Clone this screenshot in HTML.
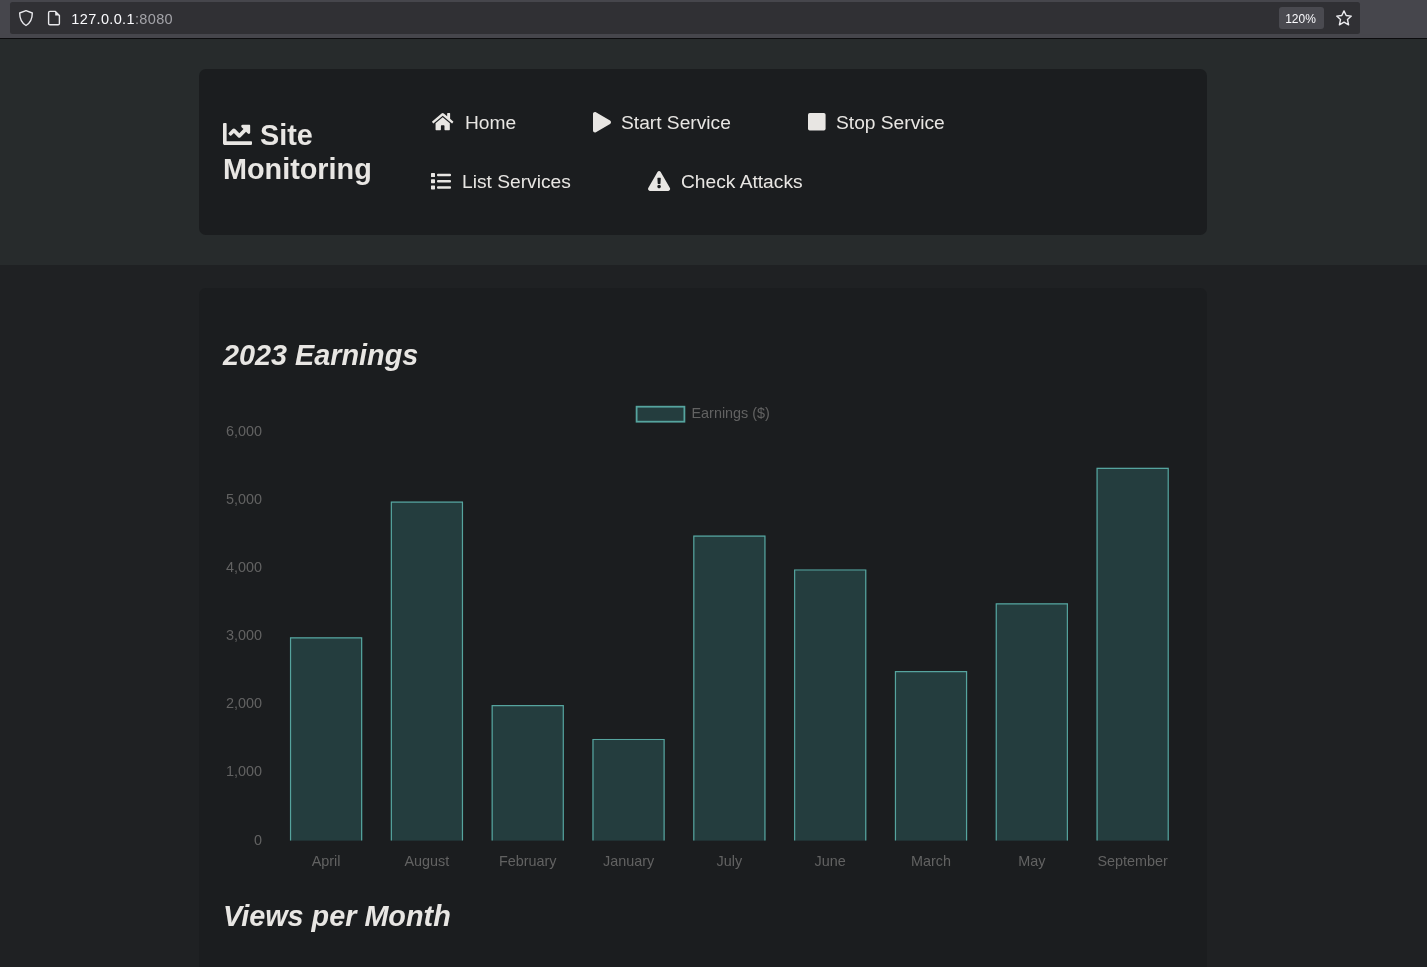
<!DOCTYPE html>
<html><head><meta charset="utf-8">
<style>
*{margin:0;padding:0;box-sizing:border-box}
html,body{width:1427px;height:967px;overflow:hidden;background:#1f2123;font-family:"Liberation Sans",sans-serif}
.gs{transform:translateZ(0)}
#tb{position:absolute;left:0;top:0;width:1427px;height:38px;background:#46464c}
#url{position:absolute;left:10px;top:2px;width:1350px;height:32px;background:#303034;border-radius:2.5px}
#tbline{position:absolute;left:0;top:38px;width:1427px;height:1px;background:#0c0c0e}
#urltext{position:absolute;left:71.3px;top:10.7px;font-size:14.5px;letter-spacing:0.35px;color:#fbfbfe;white-space:nowrap}
#urltext span{color:#a3a3a8}
#zoom{position:absolute;left:1279px;top:7px;width:45px;height:22px;background:#4a4a50;border-radius:3px;color:#fbfbfe;font-size:12px;text-align:center;line-height:22px}
#hdr{position:absolute;left:0;top:39px;width:1427px;height:226px;background:#272b2c}
#nav{position:absolute;left:199px;top:69px;width:1008px;height:166px;background:#1b1d1f;border-radius:7px}
#brand{position:absolute;left:223px;top:118px;color:#e8e6e3;font-weight:bold;font-size:28.8px;line-height:34px;white-space:nowrap}
.ni{position:absolute;color:#e8e6e3;font-size:19.2px;white-space:nowrap;line-height:22px}
#card{position:absolute;left:199px;top:288px;width:1008px;height:700px;background:#1b1d1f;border-radius:7px}
h2{position:absolute;color:#e8e6e3;font-weight:bold;font-style:italic;font-size:28.8px;white-space:nowrap;line-height:34px}
svg{position:absolute;overflow:visible}
</style></head><body>
<div id="tb">
<div id="url"></div>
<svg style="left:0;top:0" width="80" height="38" viewBox="0 0 80 38">
 <path d="M26 10.6 L32.3 13 C32.3 19.5 30 23.2 26 25.5 C22 23.2 19.7 19.5 19.7 13 Z" fill="none" stroke="#e8e8ec" stroke-width="1.4" stroke-linejoin="round"/>
 <path d="M49.9 11.4 H55.4 L59.4 15.4 V23.5 Q59.4 24.8 58.1 24.8 H49.9 Q48.6 24.8 48.6 23.5 V12.7 Q48.6 11.4 49.9 11.4 Z" fill="none" stroke="#e8e8ec" stroke-width="1.4" stroke-linejoin="round"/>
 <path d="M55.2 11.6 V15.6 H59.2 Z" fill="#e8e8ec"/>
</svg>
<div id="urltext" class="gs">127.0.0.1<span>:8080</span></div>
<div id="zoom"><span class="gs" style="display:inline-block;position:relative;left:-1px;top:0.5px">120%</span></div>
<svg style="left:1334px;top:9px" width="20" height="18" viewBox="0 0 20 18">
 <path d="M10 1.9 L12.2 6.5 L17.3 7.1 L13.5 10.6 L14.6 15.8 L10 13.2 L5.4 15.8 L6.5 10.6 L2.7 7.1 L7.8 6.5 Z" fill="none" stroke="#ececf0" stroke-width="1.4" stroke-linejoin="round"/>
</svg>
</div>
<div id="tbline"></div>
<div id="hdr"></div>
<div id="nav"></div>
<div id="brand" class="gs"><span style="display:inline-block;width:37px"></span>Site<br>Monitoring</div>
<!-- chart-line icon -->
<svg style="left:223px;top:123.2px" width="29" height="22" viewBox="0 64 512 384" preserveAspectRatio="none">
 <path fill="#e8e6e3" d="M496 384H64V80c0-8.84-7.16-16-16-16H16C7.160 64 0 71.16 0 80v336c0 17.67 14.33 32 32 32h464c8.84 0 16-7.16 16-16v-32c0-8.84-7.16-16-16-16zM464 96H345.94c-21.38 0-32.09 25.85-16.970 40.97l32.4 32.4L288 242.75l-73.37-73.37c-12.5-12.5-32.76-12.5-45.250 0l-68.69 68.69c-6.25 6.25-6.25 16.38 0 22.63l22.62 22.62c6.25 6.25 16.38 6.25 22.63 0L192 237.25l73.37 73.37c12.5 12.5 32.76 12.5 45.25 0l96-96 32.4 32.4c15.12 15.12 40.97 4.41 40.97-16.97V112c.01-8.84-7.15-16-15.99-16z"/>
</svg>
<!-- home -->
<svg style="left:431.7px;top:112.8px" width="21.4" height="17.2" viewBox="0 32 576 448" preserveAspectRatio="none">
 <path fill="#e8e6e3" d="M280.37 148.26L96 300.11V464a16 16 0 0 0 16 16l112.06-.29a16 16 0 0 0 15.92-16V368a16 16 0 0 1 16-16h64a16 16 0 0 1 16 16v95.64a16 16 0 0 0 16 16.05L464 480a16 16 0 0 0 16-16V300L295.67 148.26a12.19 12.19 0 0 0-15.3 0zM571.6 251.47L488 182.56V44.05a12 12 0 0 0-12-12h-56a12 12 0 0 0-12 12v72.61L318.47 43a48 48 0 0 0-61 0L4.34 251.470a12 12 0 0 0-1.6 16.9l25.5 31A12 12 0 0 0 45.15 301l235.22-193.74a12.19 12.19 0 0 1 15.3 0L530.9 301a12 12 0 0 0 16.9-1.6l25.5-31a12 12 0 0 0-1.7-16.930z"/>
</svg>
<!-- play -->
<svg style="left:592.5px;top:111.5px" width="18" height="20.5" viewBox="0 0 448 512" preserveAspectRatio="none">
 <path fill="#e8e6e3" d="M424.4 214.7L72.4 6.6C43.8-10.3 0 6.1 0 47.9V464c0 37.5 40.7 60.1 72.4 41.3l352-208c31.4-18.5 31.5-64.1 0-82.6z"/>
</svg>
<!-- stop -->
<svg style="left:808px;top:112.5px" width="17.6" height="17.6" viewBox="0 0 448 448">
 <rect x="0" y="0" width="448" height="448" rx="44" fill="#e8e6e3"/>
</svg>
<!-- list -->
<svg style="left:431px;top:172.5px" width="20" height="16.5" viewBox="0 0 20 16.5">
 <rect x="0" y="0" width="4" height="4" rx="0.6" fill="#e8e6e3"/>
 <rect x="0" y="6.2" width="4" height="4" rx="0.6" fill="#e8e6e3"/>
 <rect x="0" y="12.4" width="4" height="4" rx="0.6" fill="#e8e6e3"/>
 <rect x="6" y="0.8" width="14" height="2.5" rx="1" fill="#e8e6e3"/>
 <rect x="6" y="7" width="14" height="2.5" rx="1" fill="#e8e6e3"/>
 <rect x="6" y="13.2" width="14" height="2.5" rx="1" fill="#e8e6e3"/>
</svg>
<!-- warning -->
<svg style="left:648px;top:170.9px" width="22.2" height="19.9" viewBox="0 0 576 512" preserveAspectRatio="none">
 <path fill="#e8e6e3" d="M569.517 440.013C587.975 472.007 564.806 512 527.940 512H48.054c-36.937 0-59.999-40.055-41.577-71.987L246.423 23.985c18.467-32.009 64.720-31.951 83.154 0l239.940 416.028zM288 354c-25.405 0-46 20.595-46 46s20.595 46 46 46 46-20.595 46-46-20.595-46-46-46zm-43.673-165.346l7.418 136c.347 6.364 5.609 11.346 11.982 11.346h48.546c6.373 0 11.635-4.982 11.982-11.346l7.418-136c.375-6.874-5.098-12.654-11.982-12.654h-63.383c-6.884 0-12.356 5.780-11.981 12.654z"/>
</svg>
<div class="ni gs" style="left:465px;top:112px">Home</div>
<div class="ni gs" style="left:621px;top:112px">Start Service</div>
<div class="ni gs" style="left:836px;top:112px">Stop Service</div>
<div class="ni gs" style="left:462px;top:171px">List Services</div>
<div class="ni gs" style="left:681px;top:171px">Check Attacks</div>
<div id="card"></div>
<h2 class="gs" style="left:223px;top:338px">2023 Earnings</h2>
<h2 class="gs" style="left:223px;top:899px">Views per Month</h2>
<!-- CHART -->
<svg style="left:0;top:0" width="1427" height="967" viewBox="0 0 1427 967">
<g class="gs" font-family="Liberation Sans, sans-serif" font-size="14.4" fill="#626262">
<rect x="289.94" y="637.20" width="72.30" height="203.40" fill="rgba(75,192,192,0.2)"/>
<path d="M290.54 840.60 V637.80 H361.64 V840.60" fill="none" stroke="rgb(86,164,158)" stroke-width="1.2"/>
<text x="326.09" y="865.8" text-anchor="middle">April</text>
<rect x="390.76" y="501.60" width="72.30" height="339.00" fill="rgba(75,192,192,0.2)"/>
<path d="M391.36 840.60 V502.20 H462.46 V840.60" fill="none" stroke="rgb(86,164,158)" stroke-width="1.2"/>
<text x="426.91" y="865.8" text-anchor="middle">August</text>
<rect x="491.58" y="705.00" width="72.30" height="135.60" fill="rgba(75,192,192,0.2)"/>
<path d="M492.18 840.60 V705.60 H563.28 V840.60" fill="none" stroke="rgb(86,164,158)" stroke-width="1.2"/>
<text x="527.73" y="865.8" text-anchor="middle">February</text>
<rect x="592.40" y="738.90" width="72.30" height="101.70" fill="rgba(75,192,192,0.2)"/>
<path d="M593.00 840.60 V739.50 H664.10 V840.60" fill="none" stroke="rgb(86,164,158)" stroke-width="1.2"/>
<text x="628.55" y="865.8" text-anchor="middle">January</text>
<rect x="693.22" y="535.50" width="72.30" height="305.10" fill="rgba(75,192,192,0.2)"/>
<path d="M693.82 840.60 V536.10 H764.92 V840.60" fill="none" stroke="rgb(86,164,158)" stroke-width="1.2"/>
<text x="729.37" y="865.8" text-anchor="middle">July</text>
<rect x="794.04" y="569.40" width="72.30" height="271.20" fill="rgba(75,192,192,0.2)"/>
<path d="M794.64 840.60 V570.00 H865.74 V840.60" fill="none" stroke="rgb(86,164,158)" stroke-width="1.2"/>
<text x="830.19" y="865.8" text-anchor="middle">June</text>
<rect x="894.86" y="671.10" width="72.30" height="169.50" fill="rgba(75,192,192,0.2)"/>
<path d="M895.46 840.60 V671.70 H966.56 V840.60" fill="none" stroke="rgb(86,164,158)" stroke-width="1.2"/>
<text x="931.01" y="865.8" text-anchor="middle">March</text>
<rect x="995.68" y="603.30" width="72.30" height="237.30" fill="rgba(75,192,192,0.2)"/>
<path d="M996.28 840.60 V603.90 H1067.38 V840.60" fill="none" stroke="rgb(86,164,158)" stroke-width="1.2"/>
<text x="1031.83" y="865.8" text-anchor="middle">May</text>
<rect x="1096.50" y="467.70" width="72.30" height="372.90" fill="rgba(75,192,192,0.2)"/>
<path d="M1097.10 840.60 V468.30 H1168.20 V840.60" fill="none" stroke="rgb(86,164,158)" stroke-width="1.2"/>
<text x="1132.65" y="865.8" text-anchor="middle">September</text>
<text x="262" y="844.50" text-anchor="end">0</text>
<text x="262" y="776.48" text-anchor="end">1,000</text>
<text x="262" y="708.45" text-anchor="end">2,000</text>
<text x="262" y="640.42" text-anchor="end">3,000</text>
<text x="262" y="572.40" text-anchor="end">4,000</text>
<text x="262" y="504.38" text-anchor="end">5,000</text>
<text x="262" y="436.35" text-anchor="end">6,000</text>
<rect x="636.6" y="406.7" width="47.8" height="15.0" fill="rgba(75,192,192,0.2)" stroke="rgb(86,164,158)" stroke-width="1.8"/>
<text x="691.5" y="418">Earnings ($)</text>
</g></svg>
</body></html>
